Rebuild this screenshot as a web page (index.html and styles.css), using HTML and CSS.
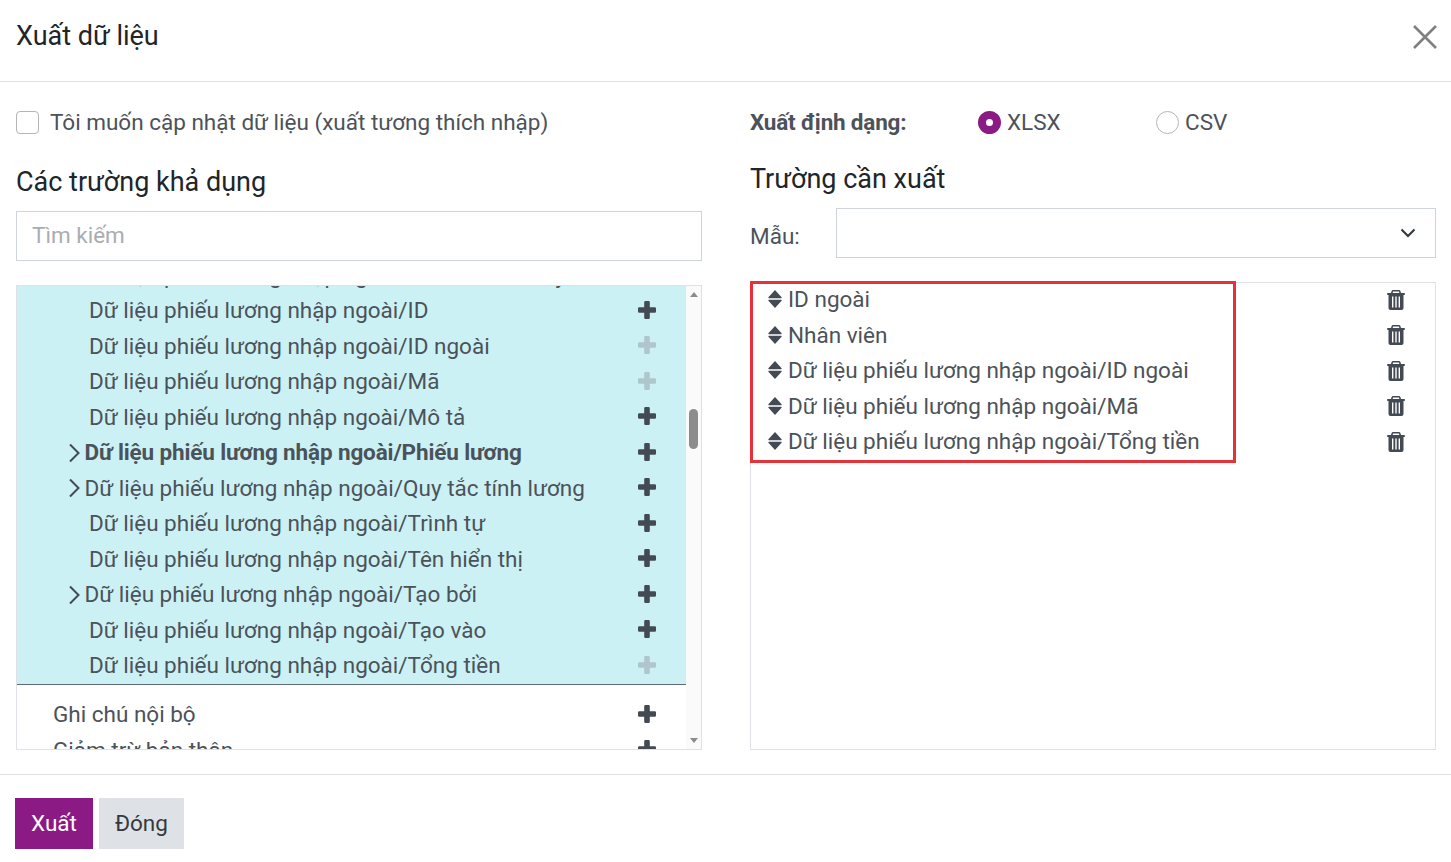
FILE: index.html
```html
<!DOCTYPE html>
<html lang="vi">
<head>
    <meta charset="UTF-8">
    <title>Xuất dữ liệu</title>
    <link rel="stylesheet" href="styles.css">
</head>
<body>

<div class="dialog">
    <header class="dialog-header">
        <h1>Xuất dữ liệu</h1>
        <svg class="close-icon" viewBox="0 0 24 24" width="24" height="24"><path d="M1 1 L23 23 M23 1 L1 23"/></svg>
    </header>

    <main class="dialog-body">
        <section class="col col-left">
            <label class="compat-row"><span class="checkbox"></span>Tôi muốn cập nhật dữ liệu (xuất tương thích nhập)</label>
            <h2 class="title-left">Các trường khả dụng</h2>
            <div class="search-box">Tìm kiếm</div>

            <div class="tree-box">
                <div class="tree-scroll">
                    <div class="tree-inner">
                        <div class="tree-group">
                            <div class="row"><span class="name">Dữ liệu phiếu lương nhập ngoài/Lần sửa đổi này</span><svg class="plus"><use href="#i-plus"/></svg></div>
                            <div class="row"><span class="name">Dữ liệu phiếu lương nhập ngoài/ID</span><svg class="plus"><use href="#i-plus"/></svg></div>
                            <div class="row"><span class="name">Dữ liệu phiếu lương nhập ngoài/ID ngoài</span><svg class="plus off"><use href="#i-plus"/></svg></div>
                            <div class="row"><span class="name">Dữ liệu phiếu lương nhập ngoài/Mã</span><svg class="plus off"><use href="#i-plus"/></svg></div>
                            <div class="row"><span class="name">Dữ liệu phiếu lương nhập ngoài/Mô tả</span><svg class="plus"><use href="#i-plus"/></svg></div>
                            <div class="row has-arrow"><svg class="arrow"><use href="#i-arrow"/></svg><span class="name bold">Dữ liệu phiếu lương nhập ngoài/Phiếu lương</span><svg class="plus"><use href="#i-plus"/></svg></div>
                            <div class="row has-arrow"><svg class="arrow"><use href="#i-arrow"/></svg><span class="name">Dữ liệu phiếu lương nhập ngoài/Quy tắc tính lương</span><svg class="plus"><use href="#i-plus"/></svg></div>
                            <div class="row"><span class="name">Dữ liệu phiếu lương nhập ngoài/Trình tự</span><svg class="plus"><use href="#i-plus"/></svg></div>
                            <div class="row"><span class="name">Dữ liệu phiếu lương nhập ngoài/Tên hiển thị</span><svg class="plus"><use href="#i-plus"/></svg></div>
                            <div class="row has-arrow"><svg class="arrow"><use href="#i-arrow"/></svg><span class="name">Dữ liệu phiếu lương nhập ngoài/Tạo bởi</span><svg class="plus"><use href="#i-plus"/></svg></div>
                            <div class="row"><span class="name">Dữ liệu phiếu lương nhập ngoài/Tạo vào</span><svg class="plus"><use href="#i-plus"/></svg></div>
                            <div class="row"><span class="name">Dữ liệu phiếu lương nhập ngoài/Tổng tiền</span><svg class="plus off"><use href="#i-plus"/></svg></div>
                        </div>
                        <div class="row top-level"><span class="name">Ghi chú nội bộ</span><svg class="plus"><use href="#i-plus"/></svg></div>
                        <div class="row top-level"><span class="name">Giảm trừ bản thân</span><svg class="plus"><use href="#i-plus"/></svg></div>
                    </div>
                </div>
                <div class="scrollbar">
                    <span class="tri tri-up"></span>
                    <span class="thumb"></span>
                    <span class="tri tri-down"></span>
                </div>
            </div>
        </section>

        <section class="col col-right">
            <div class="format-row">
                <span class="format-label">Xuất định dạng:</span>
                <label class="radio-item radio-xlsx"><span class="radio on"></span>XLSX</label>
                <label class="radio-item"><span class="radio"></span>CSV</label>
            </div>
            <h2 class="title-right">Trường cần xuất</h2>
            <div class="template-row">
                <span class="template-label">Mẫu:</span>
                <div class="select-box">
                    <svg class="chevron" viewBox="0 0 16 10" width="16" height="10"><path d="M1.5 1.5 L8 8 L14.5 1.5"/></svg>
                </div>
            </div>

            <div class="export-box">
                <div class="export-row"><svg class="sort"><use href="#i-sort"/></svg><span class="export-name">ID ngoài</span><svg class="trash"><use href="#i-trash"/></svg></div>
                <div class="export-row"><svg class="sort"><use href="#i-sort"/></svg><span class="export-name">Nhân viên</span><svg class="trash"><use href="#i-trash"/></svg></div>
                <div class="export-row"><svg class="sort"><use href="#i-sort"/></svg><span class="export-name">Dữ liệu phiếu lương nhập ngoài/ID ngoài</span><svg class="trash"><use href="#i-trash"/></svg></div>
                <div class="export-row"><svg class="sort"><use href="#i-sort"/></svg><span class="export-name">Dữ liệu phiếu lương nhập ngoài/Mã</span><svg class="trash"><use href="#i-trash"/></svg></div>
                <div class="export-row"><svg class="sort"><use href="#i-sort"/></svg><span class="export-name">Dữ liệu phiếu lương nhập ngoài/Tổng tiền</span><svg class="trash"><use href="#i-trash"/></svg></div>
                <div class="highlight"></div>
            </div>
        </section>
    </main>

    <footer class="dialog-footer">
        <button class="btn btn-primary">Xuất</button>
        <button class="btn btn-light">Đóng</button>
    </footer>
</div>

<!-- shared icons -->
<svg class="icon-defs" xmlns="http://www.w3.org/2000/svg">
    <symbol id="i-plus" viewBox="0 0 18 18"><path d="M6.2 1.2 Q6.2 0 7.4 0 H10.6 Q11.8 0 11.8 1.2 V6.2 H16.8 Q18 6.2 18 7.4 V10.6 Q18 11.8 16.8 11.8 H11.8 V16.8 Q11.8 18 10.6 18 H7.4 Q6.2 18 6.2 16.8 V11.8 H1.2 Q0 11.8 0 10.6 V7.4 Q0 6.2 1.2 6.2 H6.2 Z"/></symbol>
    <symbol id="i-arrow" viewBox="0 0 12 20"><path d="M1.5 1.5 L10 10 L1.5 18.5" fill="none" stroke="currentColor" stroke-width="2"/></symbol>
    <symbol id="i-sort" viewBox="0 0 14 18"><path d="M7 0 L13.6 7.2 Q14 8.3 13 8.3 H1 Q0 8.3 .4 7.2 Z M1 9.7 H13 Q14 9.7 13.6 10.8 L7 18 L.4 10.8 Q0 9.7 1 9.7 Z"/></symbol>
    <symbol id="i-trash" viewBox="0 0 18 20"><path fill-rule="evenodd" d="M6 0 H12 Q13 0 13.4 1 L14 3 H17 Q18 3 18 3.8 V4.2 Q18 5 17 5 H16.5 V18 Q16.5 20 14.5 20 H3.5 Q1.5 20 1.5 18 V5 H1 Q0 5 0 4.2 V3.8 Q0 3 1 3 H4 L4.6 1 Q5 0 6 0 Z M6 1.6 L5.7 3 H12.3 L12 1.6 Z M5 6.5 V17.5 H6.4 V6.5 Z M8.3 6.5 V17.5 H9.7 V6.5 Z M11.6 6.5 V17.5 H13 V6.5 Z"/></symbol>
</svg>

</body>
</html>
```

FILE: styles.css
```css
* {
    box-sizing: border-box;
}
body {
    margin: 0;
    background-color: #fff;
    font-family: Roboto, "Noto Sans", sans-serif;
    font-size: 22.5px;
    color: #4c5259;
}
.dialog {
    width: 1451px;
    height: 862px;
    display: flex;
    flex-direction: column;
    overflow: hidden;
}
.dialog-header {
    height: 82px;
    flex: none;
    display: flex;
    align-items: flex-start;
    justify-content: space-between;
    padding: 19px 14px 0 16px;
    border-bottom: 1px solid #dee2e6;
}
h1 {
    margin: 0;
    font-size: 27px;
    font-weight: 400;
    line-height: 35px;
    color: #212529;
}
.close-icon {
    margin-top: 6px;
    fill: none;
    stroke: #808080;
    stroke-width: 2.6;
}
.dialog-body {
    height: 692px;
    flex: none;
    display: flex;
    gap: 48px;
    padding: 0 15px 0 16px;
}
.col {
    width: 686px;
    flex: none;
    display: flex;
    flex-direction: column;
}
h2 {
    margin: 0;
    font-size: 27px;
    font-weight: 400;
    line-height: 35px;
    color: #212529;
}

/* left column */
.compat-row {
    display: flex;
    align-items: center;
    gap: 11px;
    height: 30px;
    margin-top: 25px;
}
.checkbox {
    width: 23px;
    height: 23px;
    border: 1px solid #b5b5b5;
    border-radius: 4px;
}
.title-left {
    margin-top: 28px;
}
.search-box {
    height: 50px;
    margin-top: 11px;
    padding-left: 15px;
    border: 1px solid #ced4da;
    line-height: 47px;
    color: #a9adb1;
}
.tree-box {
    height: 465px;
    margin-top: 24px;
    display: flex;
    border: 1px solid #dee2e6;
}
.tree-scroll {
    flex: 1;
    overflow: hidden;
}
.tree-inner {
    margin-top: -28.5px;
}
.tree-group {
    background-color: #cbf1f5;
    border-bottom: 1px solid #5f6a72;
    padding-bottom: 0.5px;
    margin-bottom: 12px;
}
.row {
    height: 35.5px;
    display: flex;
    align-items: center;
    padding-left: 72px;
    padding-right: 30px;
    line-height: 35px;
    white-space: nowrap;
}
.row.has-arrow {
    padding-left: 51px;
}
.row.top-level {
    padding-left: 36px;
}
.name {
    flex: 1;
}
.bold {
    font-weight: 700;
    letter-spacing: -0.14px;
}
.plus {
    width: 18px;
    height: 18px;
    margin-top: -2px;
    fill: #434a54;
}
.plus.off {
    fill: #afc6cc;
}
.arrow {
    width: 13px;
    height: 20px;
    margin-right: 3.5px;
    color: #434a54;
}
.scrollbar {
    width: 15px;
    flex: none;
    display: flex;
    flex-direction: column;
    align-items: center;
    background-color: #fafafa;
}
.thumb {
    width: 9px;
    height: 40px;
    margin-top: 112px;
    border-radius: 5px;
    background-color: #8c8c8c;
}
.tri {
    width: 0;
    height: 0;
    border-left: 4.5px solid transparent;
    border-right: 4.5px solid transparent;
}
.tri-up {
    margin-top: 6px;
    border-bottom: 5px solid #8c8c8c;
}
.tri-down {
    margin-top: auto;
    margin-bottom: 6px;
    border-top: 5px solid #8c8c8c;
}

/* right column */
.format-row {
    display: flex;
    align-items: center;
    height: 30px;
    margin-top: 25px;
}
.format-label {
    width: 228px;
    font-weight: 700;
    letter-spacing: -0.2px;
}
.radio-item {
    display: flex;
    align-items: center;
    gap: 6px;
}
.radio-xlsx {
    width: 178px;
}
.radio {
    width: 23px;
    height: 23px;
    border: 1px solid #b5b5b5;
    border-radius: 50%;
}
.radio.on {
    border: 8px solid #8b1a84;
}
.title-right {
    margin-top: 25px;
}
.template-row {
    display: flex;
    align-items: center;
    margin-top: 11px;
}
.template-label {
    width: 86px;
    padding-top: 5px;
}
.select-box {
    flex: 1;
    height: 50px;
    display: flex;
    align-items: center;
    justify-content: flex-end;
    padding-right: 19px;
    border: 1px solid #ced4da;
}
.chevron {
    fill: none;
    stroke: #2f353b;
    stroke-width: 2;
}
.export-box {
    position: relative;
    height: 468px;
    margin-top: 24px;
    border: 1px solid #dee2e6;
}
.export-row {
    height: 35.5px;
    display: flex;
    align-items: center;
    padding-left: 17px;
    padding-right: 30px;
}
.export-row:first-child {
    margin-top: -1.5px;
}
.sort {
    width: 14px;
    height: 18px;
    margin-right: 6px;
    fill: #434a54;
}
.export-name {
    flex: 1;
    white-space: nowrap;
}
.trash {
    width: 18px;
    height: 20px;
    margin-top: 1px;
    fill: #434a54;
}
.highlight {
    position: absolute;
    left: -1px;
    top: -2px;
    width: 486px;
    height: 182px;
    border: 3px solid #e53238;
}

/* footer */
.dialog-footer {
    flex: 1;
    display: flex;
    align-items: flex-start;
    gap: 6px;
    padding: 23px 0 0 15px;
    border-top: 1px solid #dee2e6;
}
.btn {
    height: 51px;
    padding: 0 16px 2px;
    border: none;
    font-family: inherit;
    font-size: 22.5px;
}
.btn-primary {
    background-color: #8b1a84;
    color: #fff;
}
.btn-light {
    background-color: #dee2e6;
    color: #343a40;
}
.icon-defs {
    display: none;
}
```
